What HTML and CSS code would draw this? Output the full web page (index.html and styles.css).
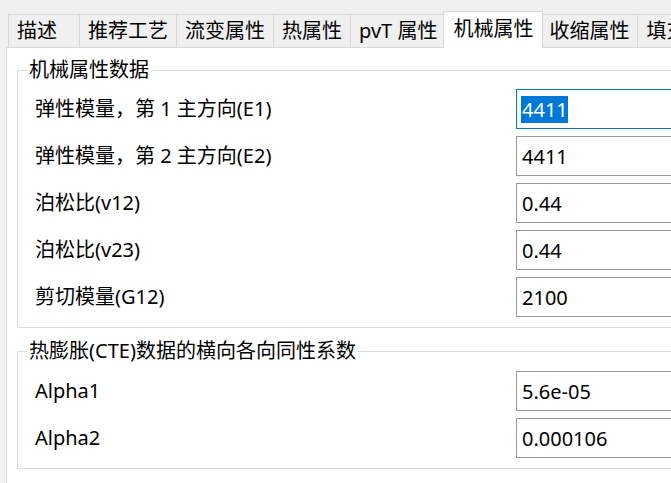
FILE: index.html
```html
<!DOCTYPE html>
<html lang="zh-CN">
<head>
<meta charset="utf-8">
<title>机械属性</title>
<link rel="stylesheet" href="styles.css">
</head>
<body>
<div class="window">
  <div class="tabbar">
    <div class="tab first">描述</div>
    <div class="tab">推荐工艺</div>
    <div class="tab">流变属性</div>
    <div class="tab">热属性</div>
    <div class="tab">pvT 属性</div>
    <div class="tab active">机械属性</div>
    <div class="tab">收缩属性</div>
    <div class="tab">填充物属性</div>
  </div>
  <div class="panel">
    <fieldset class="group">
      <legend>机械属性数据</legend>
      <div class="rows">
        <div class="row"><span class="label">弹性模量，第 1 主方向(E1)</span><div class="field focused"><span class="sel">4411</span></div></div>
        <div class="row"><span class="label">弹性模量，第 2 主方向(E2)</span><div class="field">4411</div></div>
        <div class="row"><span class="label">泊松比(v12)</span><div class="field">0.44</div></div>
        <div class="row"><span class="label">泊松比(v23)</span><div class="field">0.44</div></div>
        <div class="row"><span class="label">剪切模量(G12)</span><div class="field">2100</div></div>
      </div>
    </fieldset>
    <fieldset class="group second">
      <legend>热膨胀(CTE)数据的横向各向同性系数</legend>
      <div class="rows">
        <div class="row"><span class="label">Alpha1</span><div class="field">5.6e-05</div></div>
        <div class="row"><span class="label">Alpha2</span><div class="field">0.000106</div></div>
      </div>
    </fieldset>
  </div>
</div>
</body>
</html>
```

FILE: styles.css
```css
html, body {
  margin: 0;
  overflow: hidden;
}

body {
  background: #f0f0f0;
  font-family: "Noto Sans", "Noto Sans CJK SC", sans-serif;
  font-size: 20px;
  color: #000;
}

.window {
  width: 720px;
  height: 483px;
  display: flex;
  flex-direction: column;
}

.tabbar {
  display: flex;
  align-items: flex-end;
  height: 36px;
  margin-top: 11px;
  padding-left: 8px;
  flex-shrink: 0;
}

.tab {
  height: 33px;
  box-sizing: border-box;
  padding: 0 8px;
  border: 1px solid #d9d9d9;
  border-right: none;
  border-bottom: none;
  background: #f0f0f0;
  line-height: 32px;
  white-space: nowrap;
  flex-shrink: 0;
}

.tab.first {
  min-width: 71px;
}

.tab.active {
  height: 37px;
  margin: 0 -3px -1px -2px;
  padding: 0 9px;
  border-right: 1px solid #d9d9d9;
  background: #fff;
  line-height: 33px;
  position: relative;
  z-index: 1;
}

.panel {
  flex: 1;
  background: #fff;
  border-top: 1px solid #d9d9d9;
  border-left: 1px solid #d9d9d9;
  margin-left: 6px;
  padding: 10px 0 0 10px;
}

.group {
  margin: 0;
  padding: 7px 0 10px 0;
  border: 1px solid #dcdcdc;
  min-width: 0;
  width: 680px;
  box-sizing: border-box;
}

.group.second {
  margin-top: 11px;
  padding-top: 8px;
}

.group legend {
  margin-left: 9px;
  padding: 0 2px;
  line-height: 24px;
}

.rows {
  display: flex;
  flex-direction: column;
  gap: 7px;
}

.row {
  display: flex;
  align-items: center;
  height: 40px;
}

.label {
  width: 498px;
  box-sizing: border-box;
  padding-left: 17px;
  line-height: 24px;
  flex-shrink: 0;
  white-space: nowrap;
}

.field {
  width: 180px;
  height: 40px;
  box-sizing: border-box;
  border: 1px solid #9a9a9a;
  display: flex;
  align-items: center;
  padding-left: 5px;
  flex-shrink: 0;
  white-space: nowrap;
}

.field.focused {
  border-color: #0078d7;
  padding-left: 4px;
}

.sel {
  background: #0078d7;
  color: #fff;
  padding-left: 1px;
}
```
